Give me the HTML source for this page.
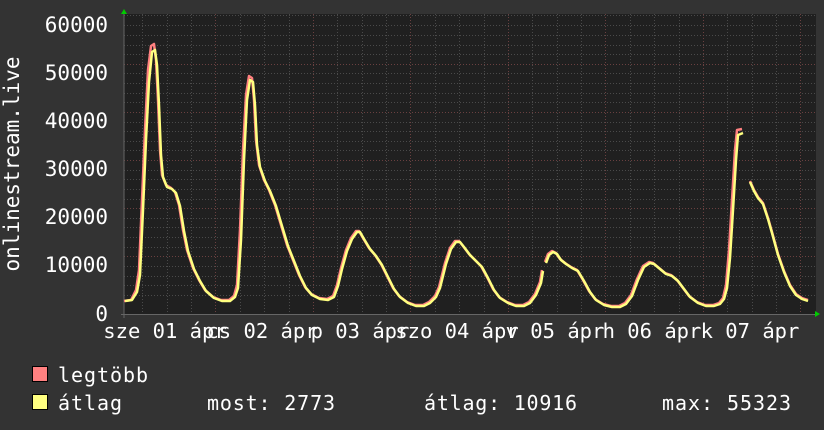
<!DOCTYPE html>
<html><head><meta charset="utf-8"><style>
html,body{margin:0;padding:0;background:#333;}
svg{display:block;}
text{font-family:"DejaVu Sans Mono","Liberation Mono",monospace;fill:#fff;}
</style></head><body>
<svg width="824" height="430" viewBox="0 0 824 430" xmlns="http://www.w3.org/2000/svg">
<rect width="824" height="430" fill="#333"/>
<rect x="124" y="14" width="692" height="301" fill="#202020"/>
<g stroke="#4a4a4a" stroke-dasharray="1,2" stroke-width="1">
<path d="M124 295.5H816M124 285.5H816M124 276.5H816M124 266.5H816M124 247.5H816M124 237.5H816M124 227.5H816M124 218.5H816M124 199.5H816M124 189.5H816M124 179.5H816M124 170.5H816M124 150.5H816M124 141.5H816M124 131.5H816M124 122.5H816M124 102.5H816M124 93.5H816M124 83.5H816M124 73.5H816M124 54.5H816M124 45.5H816M124 35.5H816M124 25.5H816M124 15.5H816"/>
<path d="M142.5 14V315M167.5 14V315M191.5 14V315M240.5 14V315M264.5 14V315M289.5 14V315M337.5 14V315M362.5 14V315M386.5 14V315M435.5 14V315M459.5 14V315M484.5 14V315M532.5 14V315M557.5 14V315M581.5 14V315M630.5 14V315M654.5 14V315M679.5 14V315M727.5 14V315M752.5 14V315M776.5 14V315"/>
</g>
<g stroke="#6a4040" stroke-dasharray="1,2" stroke-width="1">
<path d="M124 256.5H816M124 208.5H816M124 160.5H816M124 112.5H816M124 64.5H816"/>
<path d="M215.5 14V315M313.5 14V315M410.5 14V315M508.5 14V315M605.5 14V315M703.5 14V315M800.5 14V315"/>
</g>
<path d="M124 14V318M121 314.5H816" stroke="#666" stroke-width="1"/>
<polygon points="124,9 121,14 127,14" fill="#0c0"/>
<polygon points="820,314 815,311 815,317" fill="#0c0"/>
<g fill="none" stroke-width="2.5" stroke-linejoin="round">
<polyline stroke="#ff8080" transform="translate(-1,0)" points="125,301 132,300 137,290 140,270 143,200 146,130 149,70 152,46 155,44 157,60 159,100 161,150 163,175 167,185 172,188 176,192 180,205 184,230 188,250 194,268 200,280 206,290 214,297 222,300 230,300 235,296 238,285 241,230 244,150 247,95 250,76 253,78 255,100 257,140 260,165 265,180 270,190 276,205 282,225 288,245 294,260 300,275 306,287 312,294 320,298 328,299 334,296 338,285 342,268 347,250 352,238 357,231 360,231 364,238 370,248 376,255 382,264 388,276 394,288 400,296 408,302 416,305 424,305 430,302 436,296 440,287 446,263 451,248 456,241 460,241 464,246 470,254 476,260 482,266 488,277 494,289 500,297 508,302 516,305 524,305 530,302 536,294 541,282 543,270"/>
<polyline stroke="#ff8080" transform="translate(-1,0)" points="546,262 549,254 553,251 557,253 561,259 566,263 572,267 578,270 584,280 590,291 596,299 604,304 612,306 620,306 626,303 632,295 638,279 644,266 650,262 654,263 660,268 666,273 672,275 678,280 684,288 690,296 698,302 706,305 714,305 720,303 724,298 727,285 730,250 733,200 736,150 738,130 743,129"/>
<polyline stroke="#ff8080" points="750,181 754,190 758,197 763,203 768,218 772,232 778,254 784,271 790,285 796,294 802,298 808,300"/>
<polyline stroke="#ffff80" points="125,301 132,300 137,292 140,275 143,210 146,140 149,82 152,52 155,50 157,65 159,105 161,155 163,177 167,187 172,189 176,193 180,206 184,231 188,251 194,269 200,281 206,291 214,298 222,301 230,301 235,297 238,288 241,240 244,160 247,100 250,80 253,82 255,105 257,145 260,167 265,181 270,191 276,206 282,226 288,246 294,261 300,276 306,288 312,295 320,299 328,300 334,297 338,286 342,269 347,251 352,239 357,232 360,232 364,239 370,249 376,256 382,265 388,277 394,289 400,297 408,303 416,306 424,306 430,303 436,297 440,288 446,264 451,249 456,242 460,242 464,247 470,255 476,261 482,267 488,278 494,290 500,298 508,303 516,306 524,306 530,303 536,295 541,283 543,271"/>
<polyline stroke="#ffff80" points="546,263 549,255 553,252 557,254 561,260 566,264 572,268 578,271 584,281 590,292 596,300 604,305 612,307 620,307 626,304 632,296 638,280 644,267 650,263 654,264 660,269 666,274 672,276 678,281 684,289 690,297 698,303 706,306 714,306 720,304 724,299 727,288 730,258 733,210 736,160 738,135 743,133"/>
<polyline stroke="#ffff80" points="750,182 754,191 758,198 763,204 768,219 772,233 778,255 784,272 790,286 796,295 802,299 808,301"/>
</g>
<g font-size="21" text-anchor="end">
<text x="108" y="32">60000</text>
<text x="108" y="80">50000</text>
<text x="108" y="128">40000</text>
<text x="108" y="176">30000</text>
<text x="108" y="224">20000</text>
<text x="108" y="272">10000</text>
<text x="108" y="321">0</text>
</g>
<text transform="translate(19,164) rotate(-90)" font-size="21" text-anchor="middle">onlinestream.live</text>
<g font-size="20.5" text-anchor="middle">
<text x="165" y="338">sze 01 ápr</text>
<text x="262" y="338">cs 02 ápr</text>
<text x="360" y="338">p 03 ápr</text>
<text x="457" y="338">szo 04 ápr</text>
<text x="555" y="338">v 05 ápr</text>
<text x="652" y="338">h 06 ápr</text>
<text x="750" y="338">k 07 ápr</text>
</g>
<rect x="32.5" y="366.5" width="15" height="15" fill="#ff8080" stroke="#000"/>
<rect x="32.5" y="394.5" width="15" height="15" fill="#ffff80" stroke="#000"/>
<g font-size="20">
<text x="58" y="382" textLength="90">legtöbb</text>
<text x="58" y="410" textLength="64">átlag</text>
<text x="207" y="410" textLength="128">most: 2773</text>
<text x="424" y="410" textLength="153">átlag: 10916</text>
<text x="662" y="410" textLength="129">max: 55323</text>
</g>
</svg>
</body></html>
